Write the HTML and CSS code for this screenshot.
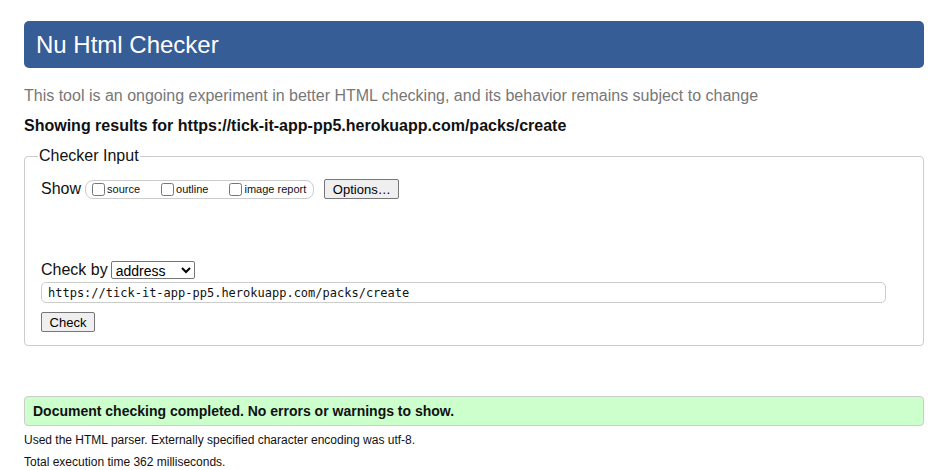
FILE: index.html
```html
<!DOCTYPE html>
<html lang="en">
<head>
<meta charset="utf-8">
<title>Nu Html Checker</title>
<link rel="stylesheet" href="styles.css">
</head>
<body>
<h1 class="title">Nu Html Checker</h1>
<p class="intro">This tool is an ongoing experiment in better HTML checking, and its behavior remains subject to change</p>
<p class="results-for">Showing results for https://tick-it-app-pp5.herokuapp.com/packs/create</p>
<form class="checker-form">
  <fieldset class="checker-input">
    <legend class="legend">Checker Input</legend>
    <div class="show-row">
      <span class="row-label">Show</span>
      <span class="opts">
        <label class="opt"><input type="checkbox" class="cb">source</label>
        <label class="opt"><input type="checkbox" class="cb">outline</label>
        <label class="opt"><input type="checkbox" class="cb">image report</label>
      </span>
      <button type="button" class="btn options-btn">Options…</button>
    </div>
    <div class="checkby-row">
      <span class="row-label">Check by</span>
      <select class="select"><option>address</option></select>
    </div>
    <div class="url-row">
      <input type="text" class="url" value="https://tick-it-app-pp5.herokuapp.com/packs/create">
    </div>
    <div class="submit-row">
      <button type="button" class="btn check-btn">Check</button>
    </div>
  </fieldset>
</form>
<p class="success">Document checking completed. No errors or warnings to show.</p>
<p class="details">Used the HTML parser. Externally specified character encoding was utf-8.</p>
<p class="details">Total execution time 362 milliseconds.</p>
</body>
</html>
```

FILE: styles.css
```css
html, body {
  margin: 0;
  padding: 0;
  background: #fff;
}
body {
  padding: 21px 4px 0 24px;
  font-family: "Liberation Sans", Arial, sans-serif;
  color: #000;
}
.title {
  margin: 0;
  background: #365d96;
  color: #fff;
  font-size: 24px;
  font-weight: normal;
  line-height: 27px;
  padding: 10px 12px;
  border-radius: 5px;
}
.intro {
  margin: 18px 0 0 0;
  font-size: 16px;
  line-height: 20px;
  color: #777;
}
.results-for {
  margin: 10px 0 0 0;
  font-size: 16px;
  line-height: 20px;
  font-weight: bold;
  color: #111;
}
.checker-form {
  margin: 0;
}
.checker-input {
  margin: 11px 0 0 0;
  padding: 10px 16px 13px 16px;
  border: 1px solid #ccc;
  border-radius: 4px;
}
.legend {
  font-size: 16px;
  padding: 0 1px;
  margin-left: -3px;
  color: #111;
}
.show-row {
  display: flex;
  align-items: center;
  margin-top: 4px;
}
.row-label {
  font-size: 16px;
  margin-right: 4px;
  color: #111;
}
.opts {
  display: inline-flex;
  align-items: center;
  border: 1px solid #ccc;
  border-radius: 8px;
  height: 17px;
  padding: 0 7px 0 6px;
  gap: 21px;
}
.opt {
  display: inline-flex;
  align-items: center;
  font-size: 11px;
  color: #111;
}
.cb {
  margin: 0 2px 0 0;
  width: 13px;
  height: 13px;
}
.btn {
  font-family: "Liberation Sans", Arial, sans-serif;
  font-size: 13px;
  background: #efefef;
  border: 1px solid #767676;
  border-radius: 2px;
  color: #000;
  padding: 0 6px;
  height: 20px;
}
.options-btn {
  margin-left: 10px;
  width: 75px;
}
.checkby-row {
  display: flex;
  align-items: center;
  margin-top: 62px;
}
.checkby-row .row-label {
  margin-right: 3px;
}
.select {
  font-family: "Liberation Sans", Arial, sans-serif;
  font-size: 14px;
  width: 84px;
  height: 18px;
  padding: 0;
  border: 1px solid #767676;
  border-radius: 2px;
  background: #fff;
  color: #000;
}
.url-row {
  margin-top: 3px;
}
.url {
  box-sizing: border-box;
  width: 845px;
  height: 21px;
  border: 1px solid #ccc;
  border-radius: 5px;
  padding: 0 6px;
  font-family: "DejaVu Sans Mono", "Liberation Mono", monospace;
  font-size: 12px;
  color: #111;
  margin: 0;
}
.submit-row {
  margin-top: 9px;
}
.check-btn {
  width: 54px;
  font-size: 13px;
}
.success {
  margin: 50px 0 0 0;
  background: #ccffcc;
  border: 1px solid #ccc;
  border-radius: 4px;
  padding: 6px 8px;
  font-size: 14px;
  line-height: 16px;
  font-weight: bold;
  color: #111;
}
.details {
  margin: 6px 0 0 0;
  font-size: 12px;
  line-height: 16px;
  color: #111;
}
```
